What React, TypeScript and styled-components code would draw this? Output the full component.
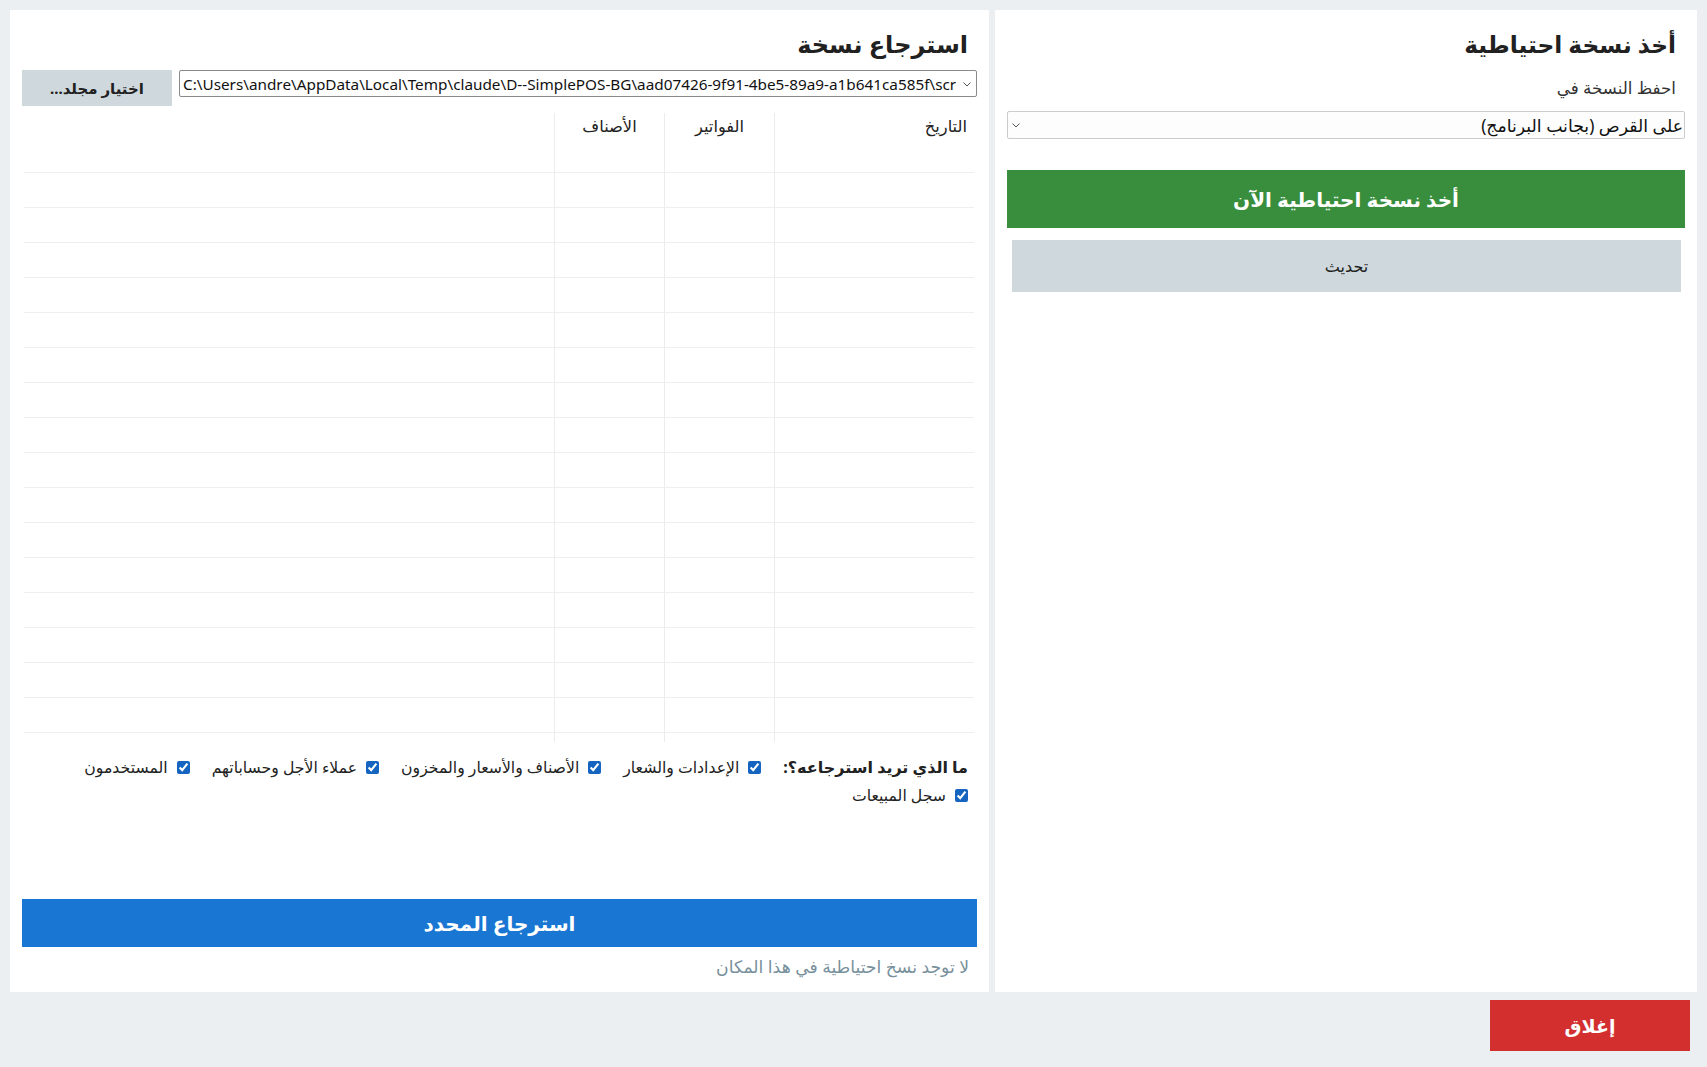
import styled, { createGlobalStyle } from 'styled-components';

const GlobalStyle = createGlobalStyle`
  * { box-sizing: border-box; }
  html, body {
    margin: 0;
    padding: 0;
    background: #eceff1;
  }
  body {
    font-family: "Noto Sans", "DejaVu Sans", sans-serif;
    color: #212121;
  }
`;

const Window = styled.div`
  width: 1707px;
  height: 1067px;
  padding: 10px 10px 0;
  display: flex;
  flex-direction: column;
  gap: 8px;
  direction: rtl;
`;

const Panels = styled.div`
  display: flex;
  gap: 6px;
  height: 982px;
`;

const Panel = styled.section<{ $width: number }>`
  width: ${({ $width }) => $width}px;
  background: #ffffff;
  padding: 12px 12px 13px;
  display: flex;
  flex-direction: column;
`;

const Title = styled.h2<{ $size?: number }>`
  margin: 2px 9px 0 0;
  font-size: ${({ $size }) => $size ?? 24}px;
  font-weight: 700;
  line-height: 40px;
  color: #212121;
`;

const FieldLabel = styled.div`
  margin: 12px 9px 0 0;
  font-size: 16.7px;
  line-height: 24px;
  color: #333;
`;

const SelectBox = styled.div<{ $ltr?: boolean }>`
  position: relative;
  flex: 1;
  direction: ${({ $ltr }) => ($ltr ? 'ltr' : 'rtl')};
`;

const Select = styled.select<{ $ltr?: boolean }>`
  appearance: none;
  width: 100%;
  height: ${({ $ltr }) => ($ltr ? 27 : 28)}px;
  margin: 0;
  border: 1px solid ${({ $ltr }) => ($ltr ? '#8a8a8a' : '#cccccc')};
  border-radius: 2px;
  background: ${({ $ltr }) => ($ltr ? '#ffffff' : '#fdfdfd')};
  font-family: inherit;
  font-size: ${({ $ltr }) => ($ltr ? 15.3 : 17.3)}px;
  color: #111;
  padding: ${({ $ltr }) => ($ltr ? '0 20px 0 3px' : '0 1px 0 20px')};
  outline: none;
`;

const Chevron = styled.svg<{ $ltr?: boolean }>`
  position: absolute;
  top: 50%;
  ${({ $ltr }) => ($ltr ? 'right: 6px;' : 'left: 5px;')}
  width: 8px;
  height: 5px;
  margin-top: -2px;
  pointer-events: none;
`;

const PathRow = styled.div`
  margin-top: 6px;
  display: flex;
  align-items: flex-start;
  gap: 7px;
`;

const FlatButton = styled.button`
  border: none;
  border-radius: 0;
  font-family: inherit;
  cursor: pointer;
  display: flex;
  align-items: center;
  justify-content: center;
`;

const FolderButton = styled(FlatButton)`
  width: 150px;
  height: 36px;
  background: #cfd8dc;
  color: #212121;
  font-size: 15px;
  font-weight: 700;
`;

const ActionButton = styled(FlatButton)<{ $bg: string; $height: number }>`
  height: ${({ $height }) => $height}px;
  background: ${({ $bg }) => $bg};
  color: #ffffff;
  font-size: 20px;
  font-weight: 700;
`;

const RefreshButton = styled(FlatButton)`
  margin: 12px 4px 0 5px;
  height: 52px;
  background: #cfd8dc;
  color: #212121;
  font-size: 16px;
`;

const Table = styled.div`
  margin: 7px 3px 0 2px;
  height: 629px;
  overflow: hidden;
`;

const Row = styled.div<{ $header?: boolean }>`
  display: grid;
  grid-template-columns: 200px 110px 110px 1fr;
  height: ${({ $header }) => ($header ? 25 : 35)}px;
  border-bottom: ${({ $header }) => ($header ? 'none' : '1px solid #eeeeee')};
`;

const Cell = styled.div<{ $center?: boolean }>`
  border-left: 1px solid #ececec;
  padding: 0 7px;
  font-size: 16.3px;
  line-height: 26px;
  color: #222;
  text-align: ${({ $center }) => ($center ? 'center' : 'start')};
  &:last-child {
    border-left: none;
  }
`;

const Options = styled.div`
  margin: 11px 9px 0 0;
  display: flex;
  flex-wrap: wrap;
  align-items: center;
  column-gap: 22px;
`;

const OptionsHeading = styled.span`
  font-size: 16px;
  font-weight: 700;
  line-height: 28px;
  color: #212121;
`;

const Option = styled.label`
  display: inline-flex;
  align-items: center;
  gap: 9px;
  font-size: 15.7px;
  line-height: 28px;
  color: #222;
`;

const Check = styled.input`
  width: 13px;
  height: 13px;
  margin: 0;
  accent-color: #1565c0;
`;

const Note = styled.div`
  margin: 8px 8px 0 0;
  font-size: 17.2px;
  line-height: 24px;
  color: #78909c;
`;

const Spacer = styled.div`
  flex: 1;
`;

const Footer = styled.div`
  display: flex;
  padding-right: 7px;
`;

const CloseButton = styled(FlatButton)`
  width: 200px;
  height: 51px;
  background: #d32f2f;
  color: #ffffff;
  font-size: 19px;
  font-weight: 700;
`;

const backupPath =
  'C:\\Users\\andre\\AppData\\Local\\Temp\\claude\\D--SimplePOS-BG\\aad07426-9f91-4be5-89a9-a1b641ca585f\\scratchpad\\backups';

const restoreOptions = [
  'الإعدادات والشعار',
  'الأصناف والأسعار والمخزون',
  'عملاء الأجل وحساباتهم',
  'المستخدمون',
  'سجل المبيعات',
];

const ChevronIcon = ({ ltr }: { ltr?: boolean }) => (
  <Chevron $ltr={ltr} viewBox="0 0 8 5">
    <path d="M0.5 0.5 L4 4 L7.5 0.5" fill="none" stroke="#555" strokeWidth="1" />
  </Chevron>
);

const App = () => {
  const emptyRows = Array.from({ length: 18 }, (_, i) => i);

  return (
    <>
      <GlobalStyle />
      <Window>
        <Panels>
          <Panel $width={702}>
            <Title $size={23.3}>أخذ نسخة احتياطية</Title>
            <FieldLabel>احفظ النسخة في</FieldLabel>
            <SelectBox style={{ flex: 'none', marginTop: 11 }}>
              <Select defaultValue="disk">
                <option value="disk">على القرص (بجانب البرنامج)</option>
              </Select>
              <ChevronIcon />
            </SelectBox>
            <ActionButton $bg="#388e3c" $height={58} style={{ marginTop: 31 }}>
              أخذ نسخة احتياطية الآن
            </ActionButton>
            <RefreshButton>تحديث</RefreshButton>
          </Panel>

          <Panel $width={979}>
            <Title>استرجاع نسخة</Title>
            <PathRow>
              <SelectBox $ltr>
                <Select $ltr defaultValue="path">
                  <option value="path">{backupPath}</option>
                </Select>
                <ChevronIcon ltr />
              </SelectBox>
              <FolderButton>اختيار مجلد...</FolderButton>
            </PathRow>

            <Table>
              <Row $header>
                <Cell>التاريخ</Cell>
                <Cell $center>الفواتير</Cell>
                <Cell $center>الأصناف</Cell>
                <Cell />
              </Row>
              {emptyRows.map((i) => (
                <Row key={i}>
                  <Cell />
                  <Cell />
                  <Cell />
                  <Cell />
                </Row>
              ))}
            </Table>

            <Options>
              <OptionsHeading>ما الذي تريد استرجاعه؟:</OptionsHeading>
              {restoreOptions.map((label) => (
                <Option key={label}>
                  <Check type="checkbox" defaultChecked />
                  {label}
                </Option>
              ))}
            </Options>

            <Spacer />
            <ActionButton $bg="#1976d2" $height={48}>
              استرجاع المحدد
            </ActionButton>
            <Note>لا توجد نسخ احتياطية في هذا المكان</Note>
          </Panel>
        </Panels>

        <Footer>
          <CloseButton>إغلاق</CloseButton>
        </Footer>
      </Window>
    </>
  );
};

export default App;
